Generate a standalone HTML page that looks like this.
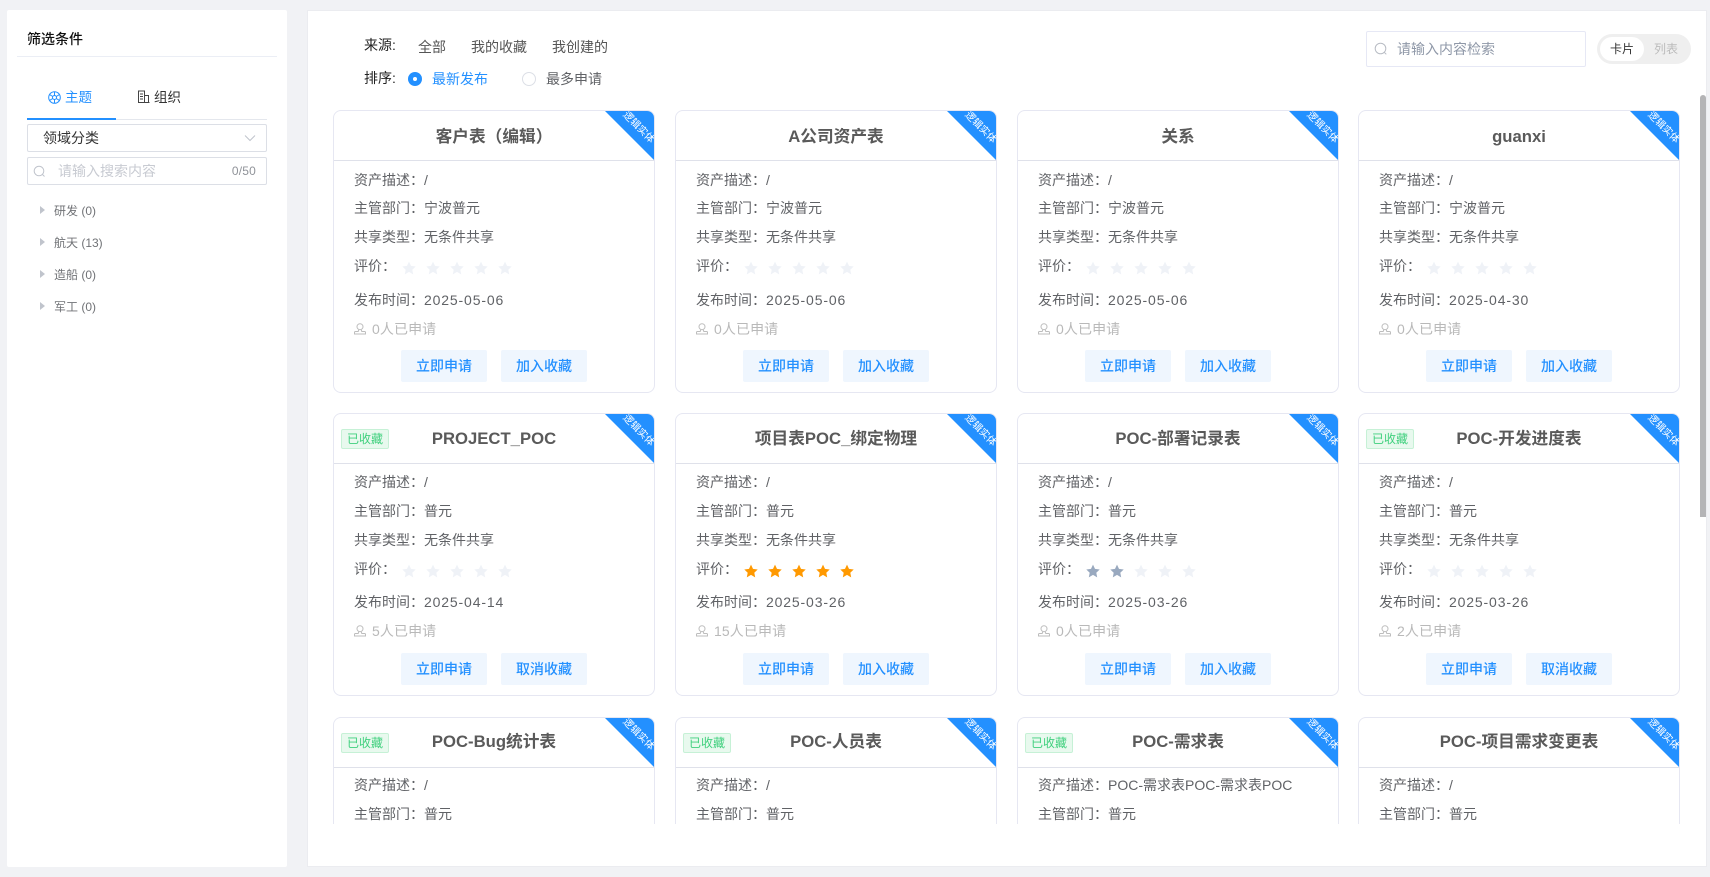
<!DOCTYPE html>
<html lang="zh-CN"><head><meta charset="utf-8"><title>资产目录</title>
<style>
*{box-sizing:border-box}
html,body{margin:0;padding:0;width:1710px;height:877px;overflow:hidden;background:#f1f2f5;font-family:"Liberation Sans","Noto Sans CJK SC",sans-serif;font-size:14px;color:#606266}
.a{position:absolute;white-space:nowrap}
#left{position:absolute;left:7px;top:10px;width:280px;height:857px;background:#fff;border-radius:2px}
#main{position:absolute;left:308px;top:11px;width:1398px;height:855px;background:#fff;box-shadow:0 0 0 1px #ebecf0}
#clip{position:absolute;left:0;top:0;width:1710px;height:824px;overflow:hidden}
.c{position:absolute;width:322px;height:283px;background:#fff;border:1px solid #e6e7f2;border-radius:8px;overflow:hidden}
.c.x{height:107px;border-bottom:0;border-radius:8px 8px 0 0}
.h{position:absolute;left:0;top:0;width:100%;height:50px;border-bottom:1px solid #dfe1ea;text-align:center;font-size:16.7px;font-weight:700;line-height:52px;color:#5a5a5a}
.rb{position:absolute;right:0;top:-1px;width:50px;height:50px;background:#2390ff;clip-path:polygon(0 0,100% 0,100% 100%)}
.rt{position:absolute;right:-9px;top:11px;width:50px;text-align:center;color:#fff;font-size:10px;line-height:12px;transform:rotate(45deg);white-space:nowrap}
.tg{position:absolute;left:7px;top:15px;width:48px;height:20px;background:#e8f9ee;border:1px solid #c6f1d6;border-radius:2px;color:#3fd07d;font-size:12px;font-weight:400;line-height:18px;text-align:center}
.l{position:absolute;left:20px;line-height:20px;white-space:nowrap;color:#606266}
.l b{font-weight:400;display:inline-block;width:70px}
.l i{font-style:normal;font-family:"Noto Sans CJK TC",sans-serif}
.d{letter-spacing:.85px}
.r1{top:59px}.r2{top:87px}.r3{top:116px}.r4{top:145px}.r5{top:179px}
.r6{top:208px;color:#b9b9b9;left:20px}
.r6 svg{position:absolute;left:0;top:4px}
.r6 span{margin-left:18px;letter-spacing:.1px}
.y .h{line-height:50px}.y .r1{top:58px}.y .r5{top:178px}.y .r6{top:207px}
.x .h{line-height:48px}.x .r1{top:57px}.x .r2{top:86px}
.s{position:absolute;top:149px;left:67px;display:flex;gap:8px}
.s svg{display:block;width:16px;height:16px;fill:#eff2f7}
.s.o svg{fill:#ff9900}
.s svg.g{fill:#99a9bf}
.bt{position:absolute;top:239px;width:86px;height:32px;background:#eff6fe;border-radius:2px;color:#2390ff;text-align:center;line-height:32px;font-size:14px;font-weight:500}
.b1{left:67px}.b2{left:167px}
.t{position:absolute;left:47px;line-height:20px;font-size:12px;color:#707276;white-space:nowrap}
.t u{position:absolute;left:-14px;top:5px;width:0;height:0;border-left:5px solid #c0c4cc;border-top:4px solid transparent;border-bottom:4px solid transparent}
</style></head><body>
<svg width="0" height="0" style="position:absolute"><defs>
<symbol id="st" viewBox="0 0 16 16"><path d="M8 1.6l2 4.3 4.7.6-3.4 3.2.9 4.7L8 11.9l-4.2 2.5.9-4.7L1.3 6.500l4.700-.6z"/></symbol>
<symbol id="us" viewBox="0 0 12 12"><circle cx="6" cy="3.700" r="3" fill="none" stroke="#bdbdbd"/><path d="M4.700 6.700L4.200 8.500H1.500a1 1 0 0 0-1 1v1.500h11V9.500a1 1 0 0 0-1-1H7.800L7.300 6.700" fill="none" stroke="#bdbdbd"/></symbol>
</defs></svg>

<div id="left">
<div class="a" style="left:20px;top:19px;line-height:20px;font-weight:500;color:#111">筛选条件</div>
<div class="a" style="left:10px;top:46px;width:260px;height:1px;background:#ebeef5"></div>
<svg class="a" style="left:41px;top:81px" width="13" height="13" viewBox="0 0 13 13" fill="none" stroke="#2390ff"><circle cx="6.500" cy="6.500" r="5.800"/><circle cx="6.500" cy="6.500" r="2"/><path d="M6.500.7v3.800M6.500 8.500v3.800M1.500 3.600l3.300 1.900M8.200 7.500l3.300 1.900M1.500 9.400l3.300-1.900M8.200 5.500l3.300-1.900"/></svg>
<div class="a" style="left:58px;top:78px;line-height:20px;color:#2390ff;font-size:13.500px">主题</div>
<svg class="a" style="left:130px;top:80px" width="13" height="13" viewBox="0 0 13 13" fill="none" stroke="#444"><path d="M1 12.500h11.500M1.500 12.500V1h6v11.500M8 5.500h3.500v7M3 4h3M3 6.500h3M3 9h3"/></svg>
<div class="a" style="left:147px;top:78px;line-height:20px;color:#333;font-size:13.500px">组织</div>
<div class="a" style="left:20px;top:109px;width:240px;height:1px;background:#e4e7ed"></div>
<div class="a" style="left:20px;top:108px;width:89px;height:2px;background:#2390ff"></div>
<div class="a" style="left:20px;top:114px;width:240px;height:28px;border:1px solid #dcdfe6;border-radius:2px"></div>
<div class="a" style="left:36px;top:118px;line-height:20px;color:#333">领域分类</div>
<svg class="a" style="left:237px;top:124px" width="12" height="8" viewBox="0 0 12 8" fill="none" stroke="#c0c4cc"><path d="M1 1.500l5 5 5-5"/></svg>
<div class="a" style="left:20px;top:147px;width:240px;height:28px;border:1px solid #dcdfe6;border-radius:2px"></div>
<svg class="a" style="left:26px;top:155px" width="13" height="13" viewBox="0 0 13 13" fill="none" stroke="#c0c4cc"><circle cx="6" cy="6" r="4.800"/><path d="M9.500 9.500l2 2"/></svg>
<div class="a" style="left:51px;top:151px;line-height:20px;color:#c8cbd2">请输入搜索内容</div>
<div class="a" style="right:31px;top:151px;line-height:20px;color:#909399;font-size:12px;letter-spacing:.2px">0/50</div>
<div class="t" style="top:191px"><u></u>研发 (0)</div>
<div class="t" style="top:223px"><u></u>航天 (13)</div>
<div class="t" style="top:255px"><u></u>造船 (0)</div>
<div class="t" style="top:287px"><u></u>军工 (0)</div>
</div>

<div id="main"></div>
<div class="a" style="left:364px;top:35px;line-height:20px;color:#222">来源:</div>
<div class="a" style="left:418px;top:37px;line-height:20px;color:#555">全部</div>
<div class="a" style="left:471px;top:37px;line-height:20px;color:#555">我的收藏</div>
<div class="a" style="left:552px;top:37px;line-height:20px;color:#555">我创建的</div>
<div class="a" style="left:364px;top:68px;line-height:20px;color:#222">排序:</div>
<div class="a" style="left:408px;top:72px;width:14px;height:14px;border-radius:50%;background:#2390ff"></div>
<div class="a" style="left:413px;top:77px;width:4px;height:4px;border-radius:50%;background:#fff"></div>
<div class="a" style="left:432px;top:69px;line-height:20px;color:#2390ff">最新发布</div>
<div class="a" style="left:522px;top:72px;width:14px;height:14px;border-radius:50%;background:#fff;border:1px solid #dcdfe6"></div>
<div class="a" style="left:546px;top:69px;line-height:20px;color:#606266">最多申请</div>
<div class="a" style="left:1366px;top:31px;width:220px;height:36px;border:1px solid #e6e8f5;border-radius:2px"></div>
<svg class="a" style="left:1374px;top:42px" width="14" height="14" viewBox="0 0 14 14" fill="none" stroke="#b8bcc4"><circle cx="6.500" cy="6.500" r="5.300"/><path d="M10.300 10.300l2 2"/></svg>
<div class="a" style="left:1397px;top:39px;line-height:20px;color:#8f98a8">请输入内容检索</div>
<div class="a" style="left:1597px;top:34px;width:94px;height:30px;border-radius:15px;background:#efefef"></div>
<div class="a" style="left:1600px;top:37px;width:44px;height:24px;border-radius:12px;background:#fff"></div>
<div class="a" style="left:1610px;top:39px;line-height:20px;font-size:12px;color:#333">卡片</div>
<div class="a" style="left:1654px;top:39px;line-height:20px;font-size:12px;color:#bbb">列表</div>
<div class="a" style="left:1700px;top:95px;width:6px;height:422px;border-radius:3px 3px 0 0;background:#b4b4b6"></div>

<div id="clip">
<!-- row 1 -->
<div class="c" style="left:333px;top:110px"><div class="h">客户表（编辑）</div><div class="rb"></div><div class="rt">逻辑实体</div>
<div class="l r1"><b>资产描述<i>：</i></b>/</div><div class="l r2"><b>主管部门<i>：</i></b>宁波普元</div><div class="l r3"><b>共享类型<i>：</i></b>无条件共享</div><div class="l r4">评价<i>：</i></div>
<div class="s"><svg><use href="#st"/></svg><svg><use href="#st"/></svg><svg><use href="#st"/></svg><svg><use href="#st"/></svg><svg><use href="#st"/></svg></div>
<div class="l r5"><b>发布时间<i>：</i></b><span class="d">2025-05-06</span></div><div class="l r6"><svg width="12" height="12"><use href="#us"/></svg><span>0人已申请</span></div>
<div class="bt b1">立即申请</div><div class="bt b2">加入收藏</div></div>

<div class="c" style="left:675px;top:110px"><div class="h">A公司资产表</div><div class="rb"></div><div class="rt">逻辑实体</div>
<div class="l r1"><b>资产描述<i>：</i></b>/</div><div class="l r2"><b>主管部门<i>：</i></b>宁波普元</div><div class="l r3"><b>共享类型<i>：</i></b>无条件共享</div><div class="l r4">评价<i>：</i></div>
<div class="s"><svg><use href="#st"/></svg><svg><use href="#st"/></svg><svg><use href="#st"/></svg><svg><use href="#st"/></svg><svg><use href="#st"/></svg></div>
<div class="l r5"><b>发布时间<i>：</i></b><span class="d">2025-05-06</span></div><div class="l r6"><svg width="12" height="12"><use href="#us"/></svg><span>0人已申请</span></div>
<div class="bt b1">立即申请</div><div class="bt b2">加入收藏</div></div>

<div class="c" style="left:1017px;top:110px"><div class="h">关系</div><div class="rb"></div><div class="rt">逻辑实体</div>
<div class="l r1"><b>资产描述<i>：</i></b>/</div><div class="l r2"><b>主管部门<i>：</i></b>宁波普元</div><div class="l r3"><b>共享类型<i>：</i></b>无条件共享</div><div class="l r4">评价<i>：</i></div>
<div class="s"><svg><use href="#st"/></svg><svg><use href="#st"/></svg><svg><use href="#st"/></svg><svg><use href="#st"/></svg><svg><use href="#st"/></svg></div>
<div class="l r5"><b>发布时间<i>：</i></b><span class="d">2025-05-06</span></div><div class="l r6"><svg width="12" height="12"><use href="#us"/></svg><span>0人已申请</span></div>
<div class="bt b1">立即申请</div><div class="bt b2">加入收藏</div></div>

<div class="c" style="left:1358px;top:110px"><div class="h">guanxi</div><div class="rb"></div><div class="rt">逻辑实体</div>
<div class="l r1"><b>资产描述<i>：</i></b>/</div><div class="l r2"><b>主管部门<i>：</i></b>宁波普元</div><div class="l r3"><b>共享类型<i>：</i></b>无条件共享</div><div class="l r4">评价<i>：</i></div>
<div class="s"><svg><use href="#st"/></svg><svg><use href="#st"/></svg><svg><use href="#st"/></svg><svg><use href="#st"/></svg><svg><use href="#st"/></svg></div>
<div class="l r5"><b>发布时间<i>：</i></b><span class="d">2025-04-30</span></div><div class="l r6"><svg width="12" height="12"><use href="#us"/></svg><span>0人已申请</span></div>
<div class="bt b1">立即申请</div><div class="bt b2">加入收藏</div></div>

<!-- row 2 -->
<div class="c y" style="left:333px;top:413px"><div class="h">PROJECT_POC</div><div class="tg">已收藏</div><div class="rb"></div><div class="rt">逻辑实体</div>
<div class="l r1"><b>资产描述<i>：</i></b>/</div><div class="l r2"><b>主管部门<i>：</i></b>普元</div><div class="l r3"><b>共享类型<i>：</i></b>无条件共享</div><div class="l r4">评价<i>：</i></div>
<div class="s"><svg><use href="#st"/></svg><svg><use href="#st"/></svg><svg><use href="#st"/></svg><svg><use href="#st"/></svg><svg><use href="#st"/></svg></div>
<div class="l r5"><b>发布时间<i>：</i></b><span class="d">2025-04-14</span></div><div class="l r6"><svg width="12" height="12"><use href="#us"/></svg><span>5人已申请</span></div>
<div class="bt b1">立即申请</div><div class="bt b2">取消收藏</div></div>

<div class="c y" style="left:675px;top:413px"><div class="h">项目表POC_绑定物理</div><div class="rb"></div><div class="rt">逻辑实体</div>
<div class="l r1"><b>资产描述<i>：</i></b>/</div><div class="l r2"><b>主管部门<i>：</i></b>普元</div><div class="l r3"><b>共享类型<i>：</i></b>无条件共享</div><div class="l r4">评价<i>：</i></div>
<div class="s o"><svg><use href="#st"/></svg><svg><use href="#st"/></svg><svg><use href="#st"/></svg><svg><use href="#st"/></svg><svg><use href="#st"/></svg></div>
<div class="l r5"><b>发布时间<i>：</i></b><span class="d">2025-03-26</span></div><div class="l r6"><svg width="12" height="12"><use href="#us"/></svg><span>15人已申请</span></div>
<div class="bt b1">立即申请</div><div class="bt b2">加入收藏</div></div>

<div class="c y" style="left:1017px;top:413px"><div class="h">POC-部署记录表</div><div class="rb"></div><div class="rt">逻辑实体</div>
<div class="l r1"><b>资产描述<i>：</i></b>/</div><div class="l r2"><b>主管部门<i>：</i></b>普元</div><div class="l r3"><b>共享类型<i>：</i></b>无条件共享</div><div class="l r4">评价<i>：</i></div>
<div class="s"><svg class="g"><use href="#st"/></svg><svg class="g"><use href="#st"/></svg><svg><use href="#st"/></svg><svg><use href="#st"/></svg><svg><use href="#st"/></svg></div>
<div class="l r5"><b>发布时间<i>：</i></b><span class="d">2025-03-26</span></div><div class="l r6"><svg width="12" height="12"><use href="#us"/></svg><span>0人已申请</span></div>
<div class="bt b1">立即申请</div><div class="bt b2">加入收藏</div></div>

<div class="c y" style="left:1358px;top:413px"><div class="h">POC-开发进度表</div><div class="tg">已收藏</div><div class="rb"></div><div class="rt">逻辑实体</div>
<div class="l r1"><b>资产描述<i>：</i></b>/</div><div class="l r2"><b>主管部门<i>：</i></b>普元</div><div class="l r3"><b>共享类型<i>：</i></b>无条件共享</div><div class="l r4">评价<i>：</i></div>
<div class="s"><svg><use href="#st"/></svg><svg><use href="#st"/></svg><svg><use href="#st"/></svg><svg><use href="#st"/></svg><svg><use href="#st"/></svg></div>
<div class="l r5"><b>发布时间<i>：</i></b><span class="d">2025-03-26</span></div><div class="l r6"><svg width="12" height="12"><use href="#us"/></svg><span>2人已申请</span></div>
<div class="bt b1">立即申请</div><div class="bt b2">取消收藏</div></div>

<!-- row 3 -->
<div class="c x" style="left:333px;top:717px"><div class="h">POC-Bug统计表</div><div class="tg">已收藏</div><div class="rb"></div><div class="rt">逻辑实体</div>
<div class="l r1"><b>资产描述<i>：</i></b>/</div><div class="l r2"><b>主管部门<i>：</i></b>普元</div></div>

<div class="c x" style="left:675px;top:717px"><div class="h">POC-人员表</div><div class="tg">已收藏</div><div class="rb"></div><div class="rt">逻辑实体</div>
<div class="l r1"><b>资产描述<i>：</i></b>/</div><div class="l r2"><b>主管部门<i>：</i></b>普元</div></div>

<div class="c x" style="left:1017px;top:717px"><div class="h">POC-需求表</div><div class="tg">已收藏</div><div class="rb"></div><div class="rt">逻辑实体</div>
<div class="l r1"><b>资产描述<i>：</i></b>POC-需求表POC-需求表POC</div><div class="l r2"><b>主管部门<i>：</i></b>普元</div></div>

<div class="c x" style="left:1358px;top:717px"><div class="h">POC-项目需求变更表</div><div class="rb"></div><div class="rt">逻辑实体</div>
<div class="l r1"><b>资产描述<i>：</i></b>/</div><div class="l r2"><b>主管部门<i>：</i></b>普元</div></div>
</div>
</body></html>
